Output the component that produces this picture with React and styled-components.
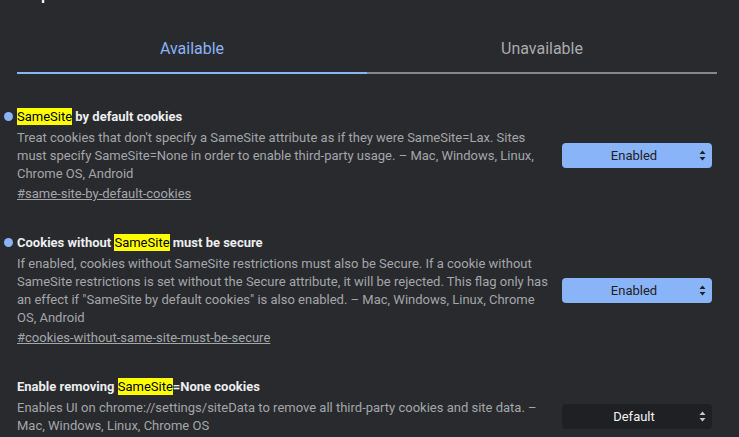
import React from 'react';
import styled, { createGlobalStyle } from 'styled-components';

const GlobalStyle = createGlobalStyle`
  html, body {
    margin: 0;
    padding: 0;
    background: #292a2d;
    overflow: hidden;
  }
  body {
    font-family: Roboto, "Liberation Sans", Arial, sans-serif;
    color: #e8eaed;
  }
`;

const Page = styled.div`
  width: 739px;
  height: 437px;
  overflow: hidden;
`;

const Header = styled.header`
  display: flex;
  justify-content: space-between;
  align-items: flex-end;
  height: 26px;
  margin-top: -22px;
  padding: 0 23px 0 17px;
`;

const Title = styled.h1`
  margin: 0;
  font-size: 22px;
  font-weight: 400;
  line-height: 26px;
  color: #fff;
`;

const Version = styled.span`
  font-size: 13px;
  line-height: 16px;
  margin-bottom: 6px;
  color: #9aa0a6;
`;

const Tabs = styled.nav`
  display: grid;
  grid-template-columns: 1fr 1fr;
  margin: 20px 22px 0 17px;
  border-bottom: 2px solid #85878b;
`;

const Tab = styled.div`
  height: 50px;
  line-height: 50px;
  text-align: center;
  font-size: 16px;
  color: ${p => (p.$active ? '#8ab4f8' : '#a8abaf')};
  margin-bottom: -2px;
  border-bottom: 2px solid ${p => (p.$active ? '#8ab4f8' : 'transparent')};
  box-sizing: border-box;
`;

const List = styled.div`
  display: flex;
  flex-direction: column;
  gap: 31px;
  padding: 34px 0 0 17px;
`;

const Row = styled.section`
  display: grid;
  grid-template-columns: 535px 150px;
  column-gap: 10px;
  align-items: center;
`;

const Info = styled.div`
  display: flex;
  flex-direction: column;
`;

const Name = styled.div`
  position: relative;
  font-size: 13px;
  font-weight: 700;
  line-height: 18px;
  color: #eceef0;
  margin-bottom: 3px;
`;

const Dot = styled.span`
  position: absolute;
  left: -13px;
  top: 4px;
  width: 9px;
  height: 9px;
  border-radius: 50%;
  background: #8ab4f8;
`;

const Mark = styled.mark`
  background: #ffff00;
  color: #000;
  font-weight: 400;
  padding: 1px 0;
`;

const Desc = styled.p`
  margin: 0;
  font-size: 13px;
  line-height: 18px;
  color: #a3a6aa;
`;

const Link = styled.a`
  margin-top: 2px;
  font-size: 13px;
  line-height: 18px;
  color: #a3a6aa;
  text-decoration: underline;
`;

const Select = styled.div`
  position: relative;
  height: 25px;
  border-radius: 4px;
  background: ${p => (p.$on ? '#8ab4f8' : '#1f2023')};
  color: ${p => (p.$on ? '#202124' : '#f1f3f4')};
  font-size: 13px;
  line-height: 25px;
  text-align: center;
  padding-right: 6px;
`;

const Arrows = styled.svg`
  position: absolute;
  right: 6px;
  top: 7px;
`;

const Chevrons = ({ color }) => (
  <Arrows width="7" height="11" viewBox="0 0 7 11">
    <path d="M3.5 0.5 L6.5 4 L0.5 4 Z" fill={color} />
    <path d="M3.5 10.5 L6.5 7 L0.5 7 Z" fill={color} />
  </Arrows>
);

const flags = [
  {
    id: 'same-site-by-default-cookies',
    dot: true,
    name: [<Mark key="m">SameSite</Mark>, ' by default cookies'],
    desc:
      "Treat cookies that don't specify a SameSite attribute as if they were SameSite=Lax. Sites must specify SameSite=None in order to enable third-party usage. – Mac, Windows, Linux, Chrome OS, Android",
    value: 'Enabled',
  },
  {
    id: 'cookies-without-same-site-must-be-secure',
    dot: true,
    name: ['Cookies without ', <Mark key="m">SameSite</Mark>, ' must be secure'],
    desc:
      'If enabled, cookies without SameSite restrictions must also be Secure. If a cookie without SameSite restrictions is set without the Secure attribute, it will be rejected. This flag only has an effect if "SameSite by default cookies" is also enabled. – Mac, Windows, Linux, Chrome OS, Android',
    value: 'Enabled',
  },
  {
    id: 'enable-removing-all-third-party-cookies',
    dot: false,
    name: ['Enable removing ', <Mark key="m">SameSite</Mark>, '=None cookies'],
    desc:
      'Enables UI on chrome://settings/siteData to remove all third-party cookies and site data. – Mac, Windows, Linux, Chrome OS',
    value: 'Default',
  },
];

export default function App() {
  return (
    <Page>
      <GlobalStyle />
      <Header>
        <Title>Experiments</Title>
        <Version>80.0.3987.85</Version>
      </Header>
      <Tabs>
        <Tab $active>Available</Tab>
        <Tab>Unavailable</Tab>
      </Tabs>
      <List>
        {flags.map(f => {
          const on = f.value === 'Enabled';
          return (
            <Row key={f.id}>
              <Info>
                <Name>
                  {f.dot && <Dot />}
                  {f.name}
                </Name>
                <Desc>{f.desc}</Desc>
                <Link>#{f.id}</Link>
              </Info>
              <Select $on={on}>
                {f.value}
                <Chevrons color={on ? '#202124' : '#c4c7ca'} />
              </Select>
            </Row>
          );
        })}
      </List>
    </Page>
  );
}
